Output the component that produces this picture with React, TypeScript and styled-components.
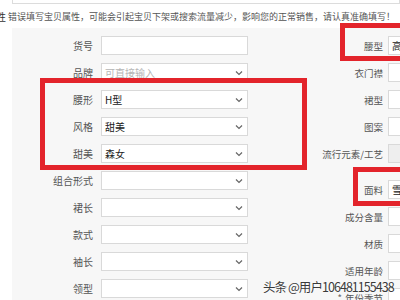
import React from "react";
import styled, { createGlobalStyle } from "styled-components";

const Global = createGlobalStyle`
  html, body { margin: 0; padding: 0; width: 400px; height: 300px; overflow: hidden; background: #ffffff; }
  body { font-family: "Noto Sans CJK SC", "Noto Sans", sans-serif; }
`;

const Page = styled.div`
  position: relative;
  width: 400px;
  height: 300px;
  overflow: hidden;
  background: #ffffff;
`;

const TopBox = styled.div`
  margin-left: 12px;
  height: 3px;
  border: 1px solid #dcdcdc;
  border-top: none;
  background: #ffffff;
`;

const Notice = styled.div`
  display: flex;
  align-items: center;
  height: 24px;
  font-size: 9px;
  color: #555;
  white-space: nowrap;
`;

const CutLabel = styled.span`
  display: inline-block;
  width: 12px;
  margin-left: -4px;
  font-size: 10px;
  color: #333;
`;

const Panel = styled.div`
  position: relative;
  margin-left: 12px;
  padding-top: 8px;
  display: flex;
  background: #f7f7f7;
  height: 272px;
`;

const Column = styled.div<{ $width: number }>`
  display: flex;
  flex-direction: column;
  flex: 0 0 ${(p) => p.$width}px;
`;

const Row = styled.div<{ $extra?: number }>`
  display: flex;
  align-items: center;
  height: 19px;
  margin-bottom: 8px;
  margin-top: ${(p) => p.$extra || 0}px;
`;

const Label = styled.div<{ $width: number; $small?: boolean }>`
  flex: 0 0 ${(p) => p.$width}px;
  text-align: right;
  font-size: ${(p) => (p.$small ? 9.5 : 10)}px;
  color: #555;
  white-space: nowrap;
`;

const Required = styled.span`
  color: #666;
  margin-right: 3px;
`;

const Field = styled.div<{ $width: number; $disabled?: boolean }>`
  flex: 0 0 ${(p) => p.$width}px;
  box-sizing: border-box;
  height: 19px;
  margin-left: ${(p) => (p.$width > 120 ? 8 : 5)}px;
  border: 1px solid #d9d9d9;
  background: ${(p) => (p.$disabled ? "#eeeeee" : "#ffffff")};
  display: flex;
  align-items: center;
  padding: 0 4px 0 3px;
  font-size: 10px;
  color: #333;
  white-space: nowrap;
  overflow: hidden;
`;

const Value = styled.span<{ $placeholder?: boolean }>`
  flex: 1;
  color: ${(p) => (p.$placeholder ? "#b5b5b5" : "#222")};
`;

const Chevron = styled.svg`
  width: 8px;
  height: 6px;
  flex: 0 0 8px;
`;

const RedBox = styled.div`
  position: absolute;
  box-sizing: border-box;
  border: 5px solid #e3242b;
  pointer-events: none;
`;

const Watermark = styled.div`
  position: absolute;
  left: 263px;
  top: 277px;
  font-family: "Noto Sans CJK SC", sans-serif;
  font-size: 12.5px;
  letter-spacing: -0.95px;
  color: #3a3a3a;
  text-shadow: 0 0 2px #fff, 0 0 1px #fff;
  white-space: nowrap;
`;

const ChevronIcon = () => (
  <Chevron viewBox="0 0 8 6">
    <path d="M1 1.5 L4 4.5 L7 1.5" fill="none" stroke="#666" strokeWidth="1.2" />
  </Chevron>
);

type LeftItem = { label: string; value?: string; placeholder?: boolean; select?: boolean };

const leftItems: LeftItem[] = [
  { label: "货号" },
  { label: "品牌", value: "可直接输入", placeholder: true, select: true },
  { label: "腰形", value: "H型", select: true },
  { label: "风格", value: "甜美", select: true },
  { label: "甜美", value: "森女", select: true },
  { label: "组合形式", select: true },
  { label: "裙长", select: true },
  { label: "款式", select: true },
  { label: "袖长", select: true },
  { label: "领型", select: true },
];

type RightItem = { label: string; value?: string; disabled?: boolean; extra?: number; required?: boolean };

const rightItems: RightItem[] = [
  { label: "腰型", value: "高腰" },
  { label: "衣门襟" },
  { label: "裙型" },
  { label: "图案" },
  { label: "流行元素/工艺", disabled: true },
  { label: "面料", value: "雪纺", extra: 9 },
  { label: "成分含量" },
  { label: "材质" },
  { label: "适用年龄" },
  { label: "年份季节", required: true },
];

export default function App() {
  return (
    <Page>
      <Global />
      <TopBox />
      <Notice>
        <CutLabel>性</CutLabel>
        错误填写宝贝属性，可能会引起宝贝下架或搜索流量减少，影响您的正常销售，请认真准确填写！
      </Notice>
      <Panel>
        <Column $width={236}>
          {leftItems.map((it) => (
            <Row key={it.label}>
              <Label $width={81}>{it.label}</Label>
              <Field $width={147}>
                <Value $placeholder={it.placeholder}>{it.value}</Value>
                {it.select && <ChevronIcon />}
              </Field>
            </Row>
          ))}
        </Column>
        <Column $width={240}>
          {rightItems.map((it) => (
            <Row key={it.label} $extra={it.extra}>
              <Label $width={135} $small>
                {it.required && <Required>*</Required>}
                {it.label}
              </Label>
              <Field $width={100} $disabled={it.disabled}>
                <Value>{it.value}</Value>
              </Field>
            </Row>
          ))}
        </Column>
        <RedBox style={{ left: 28, top: 50, width: 267, height: 92 }} />
        <RedBox style={{ left: 328, top: -5, width: 100, height: 38 }} />
        <RedBox style={{ left: 341, top: 139, width: 100, height: 39 }} />
      </Panel>
      <Watermark>头条 @用户106481155438</Watermark>
    </Page>
  );
}
